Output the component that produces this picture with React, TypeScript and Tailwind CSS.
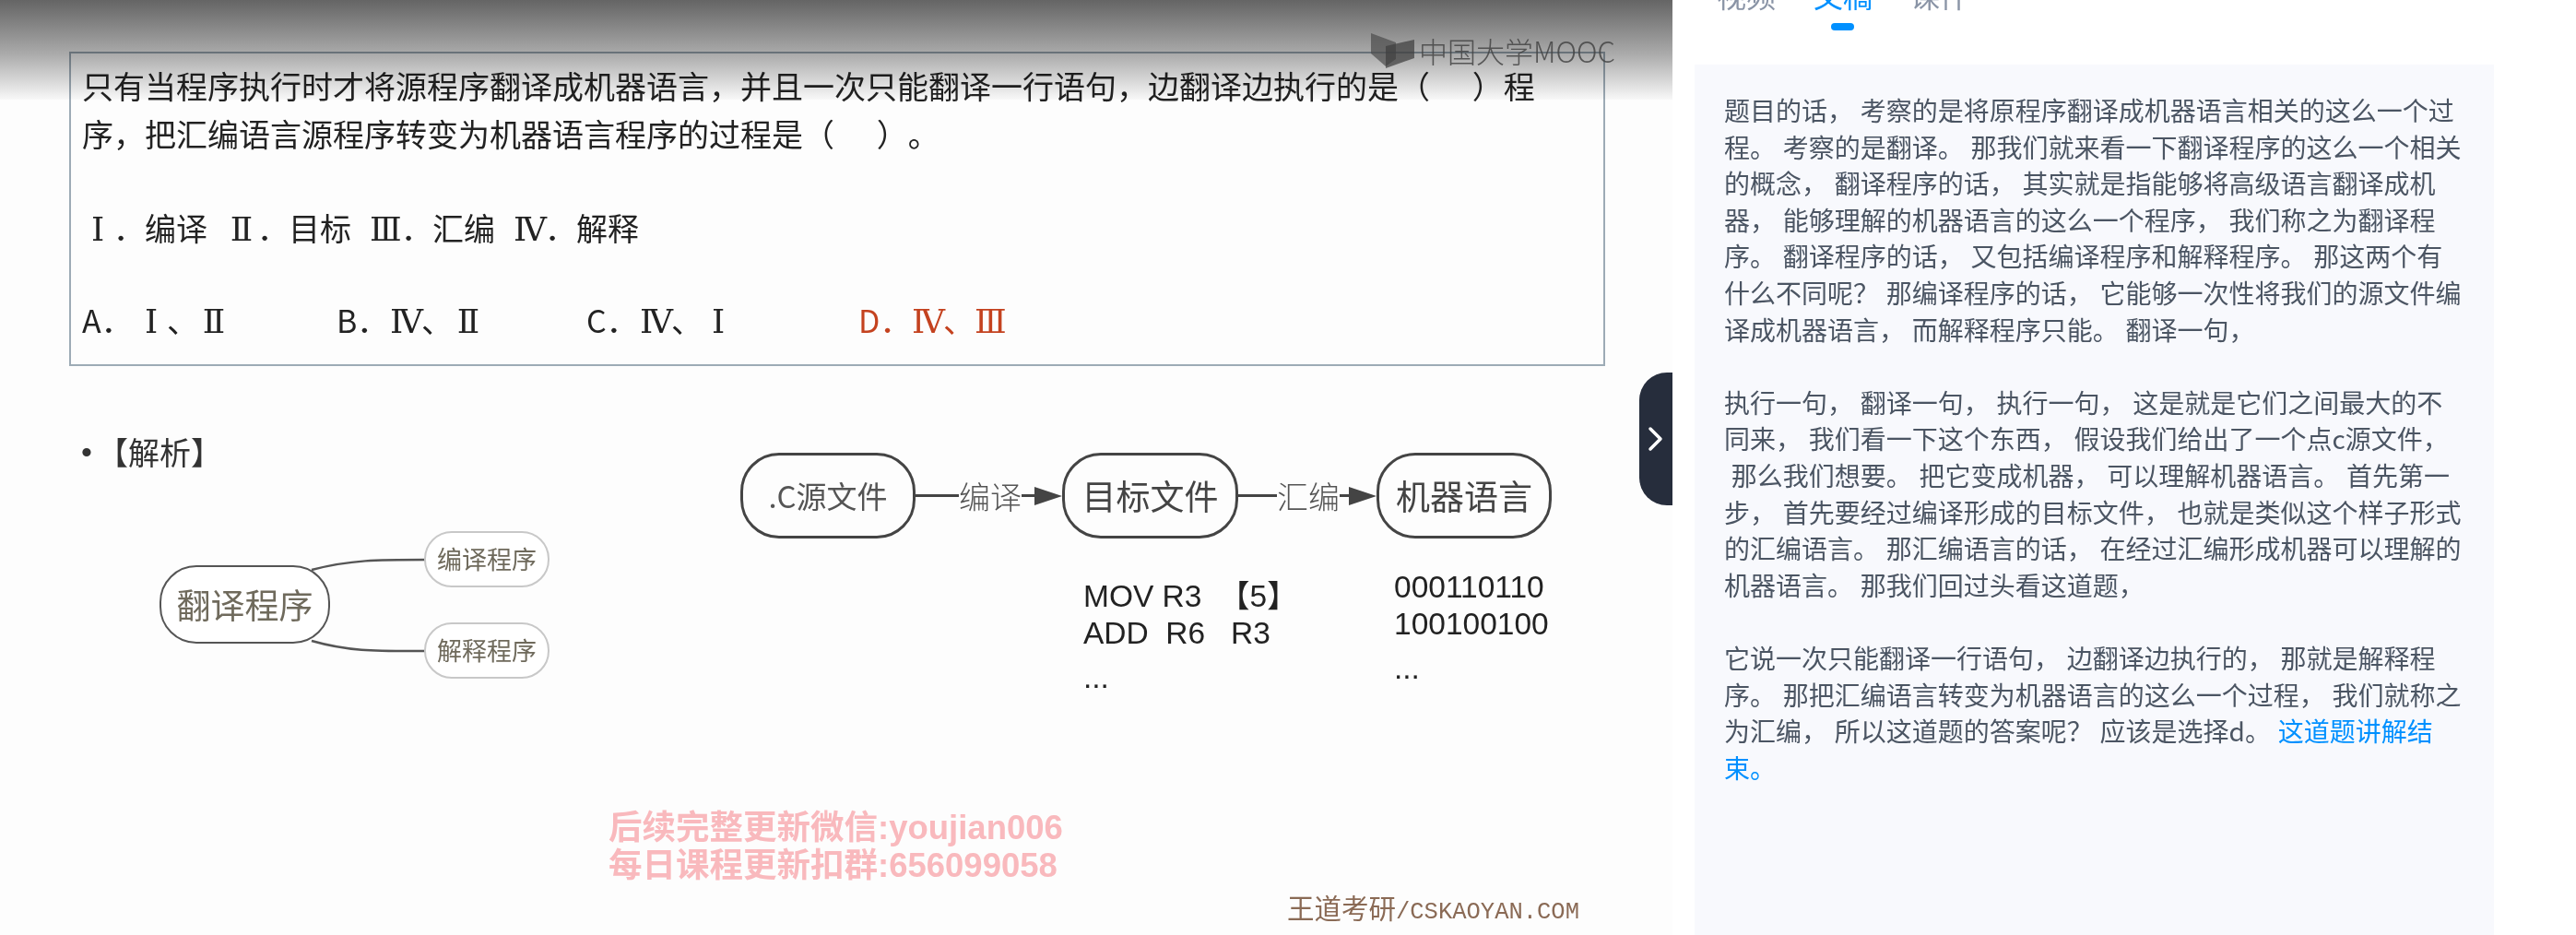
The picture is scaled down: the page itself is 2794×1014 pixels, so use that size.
const cjk = "font-['Noto_Sans_CJK_SC','Noto_Sans',sans-serif]";

function Logo() {
  return (
    <div className="absolute left-[1487px] top-[36px] z-20 flex h-[38px] items-center gap-[5px]">
      <svg width="47" height="38" viewBox="0 0 47 38">
        <path d="M0 0 L27 10 L27 28 L16 36 L0 22 Z" fill="#4c4c4c" opacity="0.7" />
        <path d="M16 38 L16 14 L47 7 L47 27 Z" fill="#3e3e3e" opacity="0.72" />
      </svg>
      <span className={`${cjk} text-[31px] leading-[38px] text-[#444]/85 font-light whitespace-nowrap`}>中国大学MOOC</span>
    </div>
  );
}

function R({ children }: { children: string }) {
  return <span className="inline-block w-[34px] text-center font-['DejaVu_Serif',serif] text-[36px] leading-[40px]">{children}</span>;
}

function Opt({ letter, a, b, className }: { letter: string; a: string; b: string; className: string }) {
  return (
    <div className={`flex items-baseline ${className}`}>
      <span className="w-[58px]">{letter}．</span>
      <R>{a}</R>
      <span className="w-[34px]">、</span>
      <R>{b}</R>
    </div>
  );
}

function Question() {
  return (
    <div className={`ml-[75px] mt-[56px] h-[341px] w-[1666px] border-2 border-[#9dabb6] pl-[12px] pt-[9px] text-[34px] text-[#222] blur-[0.4px] ${cjk}`}>
      <p className="whitespace-pre leading-[52px] [text-spacing-trim:space-all]">只有当程序执行时才将源程序翻译成机器语言，并且一次只能翻译一行语句，边翻译边执行的是（      ）程</p>
      <p className="whitespace-pre leading-[52px] [text-spacing-trim:space-all]">序，把汇编语言源程序转变为机器语言程序的过程是（      ）。</p>
      <div className="mt-[50px] flex h-[52px] items-center gap-[20px] leading-[52px]">
        <span><R>Ⅰ</R>．编译</span>
        <span><R>Ⅱ</R>．目标</span>
        <span><R>Ⅲ</R>．汇编</span>
        <span><R>Ⅳ</R>．解释</span>
      </div>
      <div className="mt-[48px] flex h-[52px] items-center leading-[52px]">
        <Opt letter="A" a="Ⅰ" b="Ⅱ" className="w-[276px]" />
        <Opt letter="B" a="Ⅳ" b="Ⅱ" className="w-[271px]" />
        <Opt letter="C" a="Ⅳ" b="Ⅰ" className="w-[295px]" />
        <Opt letter="D" a="Ⅳ" b="Ⅲ" className="text-[#c4421f]" />
      </div>
    </div>
  );
}

function MindNode({ children, className }: { children: string; className: string }) {
  return (
    <div className={`absolute flex items-center justify-center whitespace-nowrap bg-white text-[#6f6a5c] blur-[0.3px] ${className}`}>
      {children}
    </div>
  );
}

function MindMap() {
  return (
    <div className="relative mt-[30px] h-[200px]">
      <svg className="absolute left-0 top-0" width="600" height="200" fill="none" stroke="#555" strokeWidth="2.5">
        <path d="M338 75 C380 64 410 64 462 64" />
        <path d="M338 152 C380 164 410 163 462 163" />
      </svg>
      <MindNode className="left-[173px] top-[70px] h-[85px] w-[185px] rounded-[40px] border-2 border-[#555] text-[37px]">翻译程序</MindNode>
      <MindNode className="left-[460px] top-[33px] h-[61px] w-[136px] rounded-[30px] border-2 border-[#c8c8c8] text-[27px]">编译程序</MindNode>
      <MindNode className="left-[460px] top-[132px] h-[61px] w-[136px] rounded-[30px] border-2 border-[#c8c8c8] text-[27px]">解释程序</MindNode>
    </div>
  );
}

function Pill({ children, className }: { children: string; className: string }) {
  return (
    <div className={`flex h-[93px] shrink-0 items-center justify-center whitespace-nowrap rounded-[42px] border-[3px] border-[#444] blur-[0.3px] ${className}`}>
      {children}
    </div>
  );
}

function Arrow({ label, lead, tail, className }: { label: string; lead: string; tail: string; className: string }) {
  return (
    <div className={`flex shrink-0 items-center blur-[0.3px] ${className}`}>
      <span className={`h-[3px] bg-[#444] ${lead}`} />
      <span className="w-[68px] text-[34px] leading-[48px] font-light text-[#555]">{label}</span>
      <span className={`h-[3px] bg-[#444] ${tail}`} />
      <svg width="30" height="20" viewBox="0 0 30 20" className="shrink-0">
        <path d="M0 0 L30 10 L0 20 Z" fill="#444" />
      </svg>
    </div>
  );
}

function Diagram() {
  return (
    <div className={`relative flex h-[617px] w-[1814px] ${cjk}`}>
      <div className="w-[803px] shrink-0 pt-[70px]">
        <div className="flex h-[46px] items-center pl-[88px] text-[34px] leading-[46px] text-[#333] blur-[0.4px]">
          <span className="w-[17px] font-['Liberation_Sans',sans-serif]">•</span>
          <span>【解析】</span>
        </div>
        <MindMap />
      </div>
      <div className="flex-1 pt-[94px]">
        <div className="flex items-center">
          <Pill className="w-[190px] text-[33px] text-[#555]">.C源文件</Pill>
          <Arrow label="编译" lead="w-[47px]" tail="w-[14px]" className="w-[159px]" />
          <Pill className="w-[191px] text-[37px] text-[#444]">目标文件</Pill>
          <Arrow label="汇编" lead="w-[42px]" tail="w-[10px]" className="w-[150px]" />
          <Pill className="w-[190px] text-[37px] text-[#444]">机器语言</Pill>
        </div>
        <div className="mt-[33px] flex text-[33.5px] leading-[40px] text-[#222] font-['Liberation_Sans','Noto_Sans_CJK_SC',sans-serif] blur-[0.3px]">
          <div className="ml-[372px] mt-[10px] w-[337px] whitespace-pre">
            <p>MOV R3  【5】</p>
            <p>ADD  R6   R3</p>
            <p className="mt-[8px]">...</p>
          </div>
          <div className="whitespace-pre">
            <p>000110110</p>
            <p>100100100</p>
            <p className="mt-[8px]">...</p>
          </div>
        </div>
      </div>

      <div className="absolute left-[660px] top-[480px] whitespace-nowrap text-[36.5px] leading-[41px] font-bold text-[#f9b9bd] font-['Liberation_Sans','Noto_Sans_CJK_SC',sans-serif] blur-[0.4px]">
        <p>后续完整更新微信:youjian006</p>
        <p>每日课程更新扣群:656099058</p>
      </div>
      <p className="absolute left-[1396px] top-[568px] whitespace-nowrap text-[29.5px] leading-[36px] text-[#8a6a55] blur-[0.3px]">
        王道考研<span className="font-['Liberation_Mono',monospace] text-[25.5px]">/CSKAOYAN.COM</span>
      </p>
    </div>
  );
}

function Video() {
  return (
    <div className="relative h-[1014px] w-[1814px] shrink-0 overflow-hidden bg-[#fdfdfd]">
      <Question />
      <Diagram />
      <div className="absolute inset-x-0 top-0 h-[108px] bg-gradient-to-b from-[#666666] via-[#a6a6a6] via-50% to-[#fafafa] mix-blend-multiply" />
      <Logo />
      <button className="absolute right-0 top-[404px] flex h-[144px] w-[36px] items-center justify-center rounded-l-[30px] bg-[#262d3c]">
        <svg width="18" height="28" viewBox="0 0 18 28" fill="none" stroke="#fff" strokeWidth="3.5" strokeLinecap="round" strokeLinejoin="round">
          <path d="M3 3 L14 14 L3 25" />
        </svg>
      </button>
    </div>
  );
}

function Side() {
  return (
    <div className={`flex flex-1 flex-col pl-[24px] ${cjk}`}>
      <div className="relative h-[70px] shrink-0">
        <div className="flex h-[14px] items-end gap-[41px] overflow-hidden pl-[24px] text-[32px] leading-[40px] text-[#8a94a6]">
          <span className="shrink-0">视频</span>
          <span className="shrink-0 text-[#0090ff]">文稿</span>
          <span className="shrink-0">课件</span>
        </div>
        <div className="absolute left-[148px] top-[25px] h-[8px] w-[25px] rounded-full bg-[#0090ff]" />
      </div>
      <div className="w-[867px] flex-1 bg-[#f8f9fd] pl-[32px] pr-[34px] pt-[30px] text-[28px] leading-[39.6px] text-[#4b5563] [word-spacing:1.5px]">
        <p>题目的话， 考察的是将原程序翻译成机器语言相关的这么一个过程。 考察的是翻译。 那我们就来看一下翻译程序的这么一个相关的概念， 翻译程序的话， 其实就是指能够将高级语言翻译成机器， 能够理解的机器语言的这么一个程序， 我们称之为翻译程序。 翻译程序的话， 又包括编译程序和解释程序。 那这两个有什么不同呢？ 那编译程序的话， 它能够一次性将我们的源文件编译成机器语言， 而解释程序只能。 翻译一句，</p>
        <p className="mt-[39.6px]">执行一句， 翻译一句， 执行一句， 这是就是它们之间最大的不同来， 我们看一下这个东西， 假设我们给出了一个点c源文件，<br />&nbsp;那么我们想要。 把它变成机器， 可以理解机器语言。 首先第一步， 首先要经过编译形成的目标文件， 也就是类似这个样子形式的汇编语言。 那汇编语言的话， 在经过汇编形成机器可以理解的机器语言。 那我们回过头看这道题，</p>
        <p className="mt-[39.6px]">它说一次只能翻译一行语句， 边翻译边执行的， 那就是解释程序。 那把汇编语言转变为机器语言的这么一个过程， 我们就称之为汇编， 所以这道题的答案呢？ 应该是选择d。 <span className="text-[#0090ff]">这道题讲解结束。</span></p>
      </div>
    </div>
  );
}

export default function App() {
  return (
    <div className="flex h-[1014px] w-[2794px] overflow-hidden bg-white">
      <Video />
      <Side />
    </div>
  );
}
